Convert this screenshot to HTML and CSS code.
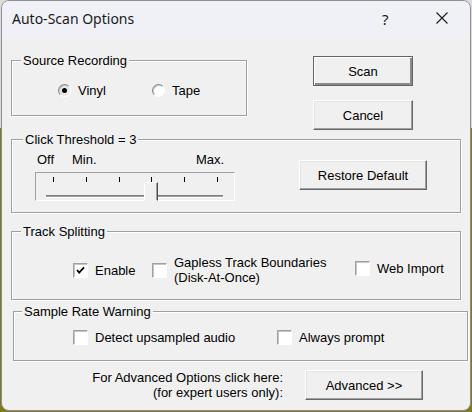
FILE: index.html
```html
<!DOCTYPE html>
<html lang="en">
<head>
    <meta charset="UTF-8">
    <title>Auto-Scan Options</title>
    <link rel="stylesheet" href="styles.css">
</head>
<body>
    <div class="window">
        <div class="titlebar">
            <span class="title">Auto-Scan Options</span>
            <span class="help">?</span>
            <span class="close">
                <svg width="12" height="12" viewBox="0 0 12 12"><path d="M0.5 0.5 L11.5 11.5 M11.5 0.5 L0.5 11.5" stroke="#1a1a1a" stroke-width="1.1" fill="none"/></svg>
            </span>
        </div>

        <div class="dialog">
            <div class="top-row">
                <div class="group source">
                    <span class="group-label">Source Recording</span>
                    <div class="radios">
                        <label class="radio-opt vinyl"><span class="radio checked"></span>Vinyl</label>
                        <label class="radio-opt"><span class="radio"></span>Tape</label>
                    </div>
                </div>
                <div class="side-buttons">
                    <button class="btn default wide">Scan</button>
                    <button class="btn wide">Cancel</button>
                </div>
            </div>

            <div class="group threshold">
                <span class="group-label">Click Threshold = 3</span>
                <div class="slider-col">
                    <div class="scale-labels">
                        <span>Off</span><span>Min.</span><span>Max.</span>
                    </div>
                    <div class="slider">
                        <div class="ticks">
                            <i></i><i></i><i></i><i></i><i></i><i></i>
                        </div>
                        <div class="track"></div>
                        <div class="thumb"></div>
                    </div>
                </div>
                <button class="btn restore">Restore Default</button>
            </div>

            <div class="group splitting">
                <span class="group-label">Track Splitting</span>
                <div class="checks split-checks">
                    <label class="check-opt"><span class="check on"><svg width="13" height="13" viewBox="0 0 13 13"><path d="M3 6 L5.2 8.6 L10 3.4" stroke="#000" stroke-width="1.8" fill="none"/></svg></span>Enable</label>
                    <label class="check-opt"><span class="check"></span><span class="two-line">Gapless Track Boundaries<br>(Disk-At-Once)</span></label>
                    <label class="check-opt web"><span class="check"></span>Web Import</label>
                </div>
            </div>

            <div class="group samplerate">
                <span class="group-label">Sample Rate Warning</span>
                <div class="checks rate-checks">
                    <label class="check-opt"><span class="check"></span>Detect upsampled audio</label>
                    <label class="check-opt"><span class="check"></span>Always prompt</label>
                </div>
            </div>

            <div class="advanced-row">
                <div class="advanced-note">For Advanced Options click here:<br>(for expert users only):</div>
                <button class="btn advanced">Advanced &gt;&gt;</button>
            </div>
        </div>
    </div>
</body>
</html>
```

FILE: styles.css
```css
html, body {
    margin: 0;
    padding: 0;
}
body {
    width: 472px;
    height: 412px;
    overflow: hidden;
    background: linear-gradient(to bottom, #dcdcdc 0, #dcdcdc 128px, #7e7b1f 128px);
    font-family: "Liberation Sans", Arial, sans-serif;
    font-size: 13px;
    color: #000;
}
.window {
    margin-left: 1px;
    width: 470px;
    height: 411px;
    box-sizing: border-box;
    border: 1px solid #8e8e8e;
    border-radius: 8px;
    background: #f0f0f0;
    overflow: hidden;
}

/* title bar */
.titlebar {
    height: 37px;
    display: flex;
    align-items: center;
    padding-left: 10px;
    background: #f0f1f6;
    font-family: "Noto Sans", "Open Sans", sans-serif;
    font-size: 14px;
    color: #1a1a1a;
}
.title {
    flex: 1;
    margin-top: -2px;
}
.help {
    width: 8px;
    margin-right: 46px;
    margin-top: -2px;
    font-size: 15px;
}
.close {
    display: flex;
    margin-right: 22px;
    margin-top: -3px;
}

.dialog {
    display: flex;
    flex-direction: column;
}

/* group boxes */
.group {
    position: relative;
    box-sizing: border-box;
    border: 1px solid #a0a0a0;
    box-shadow: inset 1px 1px #fff, 1px 1px #fff;
}
.group-label {
    position: absolute;
    top: -8px;
    left: 9px;
    padding: 0 2px;
    line-height: 15px;
    background: #f0f0f0;
    white-space: nowrap;
}

/* buttons */
.btn {
    box-sizing: border-box;
    height: 30px;
    padding: 0;
    font-family: "Liberation Sans", Arial, sans-serif;
    font-size: 13px;
    color: #000;
    background: #f0f0f0;
    border: 1px solid;
    border-color: #fff #696969 #696969 #fff;
    box-shadow: inset -1px -1px #a0a0a0, inset 1px 1px #e3e3e3;
}
.btn.default {
    border-color: #646464;
    box-shadow: inset 1px 1px #fff, inset -2px -2px #8a8a8a;
}
.wide {
    width: 100px;
}

/* source recording + side buttons */
.top-row {
    display: flex;
    align-items: flex-start;
    margin-top: 18px;
}
.source {
    width: 236px;
    height: 56px;
    margin-left: 9px;
    margin-top: 4px;
}
.radios {
    display: flex;
    padding-top: 22px;
    padding-left: 46px;
}
.radio-opt {
    display: flex;
    align-items: center;
    line-height: 15px;
}
.radio-opt.vinyl {
    width: 94px;
}
.radio {
    box-sizing: border-box;
    width: 13px;
    height: 13px;
    margin-right: 7px;
    border-radius: 50%;
    border: 1px solid;
    border-color: #8a8a8a #fff #fff #8a8a8a;
    box-shadow: inset 1px 1px #c8c8c8;
    background: #fff;
    display: flex;
    align-items: center;
    justify-content: center;
}
.radio.checked {
    background: #e9e9e9;
}
.radio.checked::after {
    content: "";
    width: 5px;
    height: 5px;
    border-radius: 50%;
    background: #000;
}
.side-buttons {
    display: flex;
    flex-direction: column;
    gap: 14px;
    margin-left: 66px;
}

/* click threshold */
.threshold {
    display: flex;
    align-items: flex-start;
    width: 450px;
    height: 74px;
    margin-top: 9px;
    margin-left: 9px;
    padding: 12px 0 0 23px;
}
.threshold .group-label {
    left: 11px;
}
.scale-labels {
    display: grid;
    grid-template-columns: 35px 124px auto;
    padding-left: 2px;
    line-height: 16px;
}
.slider {
    position: relative;
    box-sizing: border-box;
    width: 200px;
    height: 29px;
    margin-top: 4px;
    border: 1px solid;
    border-color: #a0a0a0 #fff #fff #a0a0a0;
}
.ticks {
    display: flex;
    justify-content: space-between;
    padding: 4px 16px 0 17px;
}
.ticks i {
    width: 1px;
    height: 5px;
    background: #000;
}
.track {
    width: 177px;
    height: 1px;
    margin: 13px 0 0 10px;
    border-top: 1px solid #808080;
    border-bottom: 1px solid #fff;
    background: #a0a0a0;
}
.thumb {
    position: absolute;
    left: 108px;
    top: 9px;
    box-sizing: border-box;
    width: 14px;
    height: 19px;
    background: #f0f0f0;
    border: 1px solid;
    border-color: #fff #505050 #f0f0f0 #fff;
    box-shadow: inset -1px 0 #a0a0a0;
}
.restore {
    width: 128px;
    margin-top: 8px;
    margin-left: 64px;
}

/* checkbox rows */
.checks {
    display: flex;
    align-items: center;
}
.check-opt {
    display: flex;
    align-items: center;
    line-height: 15px;
}
.check {
    box-sizing: border-box;
    flex: none;
    width: 15px;
    height: 15px;
    margin-right: 7px;
    border: 1px solid;
    border-color: #a0a0a0 #fff #fff #a0a0a0;
    box-shadow: inset 1px 1px #c4c4c4;
    background: #fff;
    display: flex;
}
.splitting {
    width: 450px;
    height: 69px;
    margin-top: 18px;
    margin-left: 9px;
}
.split-checks {
    height: 30px;
    padding-top: 23px;
    padding-left: 61px;
}
.split-checks .check-opt:nth-child(1) {
    width: 79px;
}
.split-checks .check-opt:nth-child(2) {
    width: 203px;
}
.check-opt.web {
    margin-bottom: 4px;
}
.samplerate {
    width: 455px;
    height: 50px;
    margin-top: 11px;
    margin-left: 11px;
}
.samplerate .group-label {
    left: 8px;
}
.rate-checks {
    padding-top: 18px;
    padding-left: 59px;
}
.rate-checks .check-opt:nth-child(1) {
    width: 204px;
}

/* advanced options */
.advanced-row {
    display: flex;
    align-items: center;
    margin-top: 9px;
}
.advanced-note {
    width: 281px;
    text-align: right;
    line-height: 15px;
}
.advanced {
    width: 118px;
    margin-left: 22px;
}
```
